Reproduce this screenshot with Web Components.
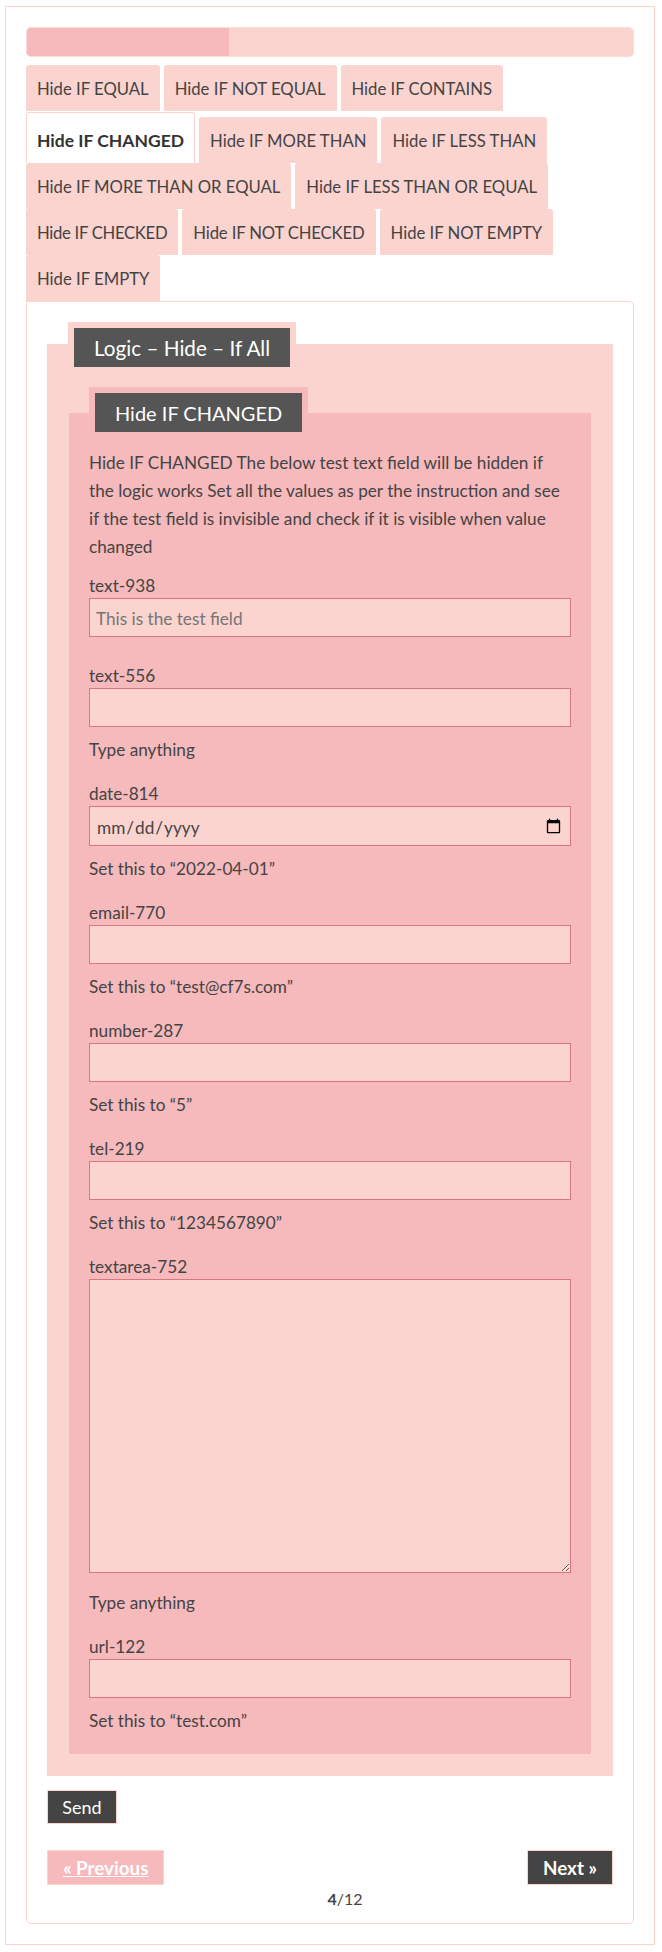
<!DOCTYPE html>
<html>
<head>
<meta charset="utf-8">
<style>
  html, body { margin: 0; padding: 0; background: #fff; }
  body { font: 17.2px/28px Lato, sans-serif; color: #444; }
</style>
</head>
<body>
<page-shell>
  <step-progress value="33.33"></step-progress>
  <step-tabs>
    <step-tab>Hide IF EQUAL</step-tab>
    <step-tab>Hide IF NOT EQUAL</step-tab>
    <step-tab>Hide IF CONTAINS</step-tab>
    <step-tab active>Hide IF CHANGED</step-tab>
    <step-tab>Hide IF MORE THAN</step-tab>
    <step-tab>Hide IF LESS THAN</step-tab>
    <step-tab>Hide IF MORE THAN OR EQUAL</step-tab>
    <step-tab>Hide IF LESS THAN OR EQUAL</step-tab>
    <step-tab style="letter-spacing:-.3px">Hide IF CHECKED</step-tab>
    <step-tab style="letter-spacing:-.15px">Hide IF NOT CHECKED</step-tab>
    <step-tab>Hide IF NOT EMPTY</step-tab>
    <step-tab>Hide IF EMPTY</step-tab>
  </step-tabs>
  <step-panel>
    <logic-group title="Logic – Hide – If All">
      <logic-group nested title="Hide IF CHANGED">
        <intro-text>Hide IF CHANGED The below test text field will be hidden if the logic works Set all the values as per the instruction and see if the test field is invisible and check if it is visible when value changed</intro-text>
        <form-field label="text-938" placeholder="This is the test field"></form-field>
        <form-field label="text-556" hint="Type anything"></form-field>
        <form-field label="date-814" type="date" hint="Set this to “2022-04-01”"></form-field>
        <form-field label="email-770" type="email" hint="Set this to “test@cf7s.com”"></form-field>
        <form-field label="number-287" type="number" hint="Set this to “5”"></form-field>
        <form-field label="tel-219" type="tel" hint="Set this to “1234567890”"></form-field>
        <form-field label="textarea-752" type="textarea" hint="Type anything"></form-field>
        <form-field label="url-122" type="url" hint="Set this to “test.com”" last></form-field>
      </logic-group>
    </logic-group>
    <send-row></send-row>
    <pager-row current="4" total="12"></pager-row>
  </step-panel>
</page-shell>

<script>
class PageShell extends HTMLElement {
  constructor() {
    super();
    const shadow = this.attachShadow({ mode: 'open' });
    shadow.innerHTML = `
      <style>
        :host {
          display: block;
          box-sizing: border-box;
          width: 650px;
          margin: 6px 0 0 5px;
          padding: 20px;
          border: 1px solid #fbd3cf;
        }
      </style>
      <slot></slot>
    `;
  }
}
customElements.define('page-shell', PageShell);

class StepProgress extends HTMLElement {
  constructor() {
    super();
    const shadow = this.attachShadow({ mode: 'open' });
    shadow.innerHTML = `
      <style>
        :host {
          display: block;
          box-sizing: border-box;
          height: 30px;
          background-color: #fbd3cf;
          border: 1px solid #fbdcd9;
          border-radius: 5px;
          overflow: hidden;
        }
        .fill { height: 100%; background-color: #f6b9bc; }
      </style>
      <div class="fill"></div>
    `;
    shadow.querySelector('.fill').style.width = this.getAttribute('value') + '%';
  }
}
customElements.define('step-progress', StepProgress);

class StepTabs extends HTMLElement {
  constructor() {
    super();
    const shadow = this.attachShadow({ mode: 'open' });
    shadow.innerHTML = `
      <style>
        :host {
          display: flex;
          flex-wrap: wrap;
          align-items: flex-end;
          column-gap: 4px;
          margin-top: 8px;
        }
      </style>
      <slot></slot>
    `;
  }
}
customElements.define('step-tabs', StepTabs);

class StepTab extends HTMLElement {
  constructor() {
    super();
    const shadow = this.attachShadow({ mode: 'open' });
    shadow.innerHTML = `
      <style>
        :host {
          display: block;
          box-sizing: border-box;
          height: 46px;
          padding: 10px 11px 8px;
          font-size: 16.7px;
          line-height: 28px;
          background-color: #fbd3cf;
          border-radius: 3px 3px 0 0;
          white-space: nowrap;
        }
        :host([active]) {
          height: 51px;
          margin-top: 1px;
          padding: 14px 10px 8px;
          font-size: 17.5px;
          font-weight: 700;
          color: #333;
          background-color: #fff;
          border: 1px solid #fbd3cf;
          border-bottom: 0;
        }
      </style>
      <slot></slot>
    `;
  }
}
customElements.define('step-tab', StepTab);

class StepPanel extends HTMLElement {
  constructor() {
    super();
    const shadow = this.attachShadow({ mode: 'open' });
    shadow.innerHTML = `
      <style>
        :host {
          display: block;
          box-sizing: border-box;
          padding: 20px 20px 10px;
          border: 1px solid #fbd3cf;
          border-radius: 0 5px 5px 5px;
        }
      </style>
      <slot></slot>
    `;
  }
}
customElements.define('step-panel', StepPanel);

class LogicGroup extends HTMLElement {
  constructor() {
    super();
    const shadow = this.attachShadow({ mode: 'open' });
    shadow.innerHTML = `
      <style>
        :host {
          display: flow-root;
          margin-top: 22px;
          padding: 0 22px 22px;
          background-color: #fbd3cf;
        }
        :host([nested]) {
          margin-top: 40px;
          padding: 0 20px 19px;
          background-color: #f6b9bc;
        }
        .legend {
          display: block;
          width: fit-content;
          margin: -22px 0 0 -1px;
          padding: 0 20px;
          height: 39px;
          line-height: 40px;
          font-size: 20.7px;
          color: #fff;
          background-color: #555;
          border: 6px solid #fbd3cf;
        }
        :host([nested]) .legend {
          margin: -26px 0 0;
          font-size: 20px;
          border-color: #f6b9bc;
        }
      </style>
      <div class="legend"></div>
      <slot></slot>
    `;
    shadow.querySelector('.legend').textContent = this.getAttribute('title');
  }
}
customElements.define('logic-group', LogicGroup);

class IntroText extends HTMLElement {
  constructor() {
    super();
    const shadow = this.attachShadow({ mode: 'open' });
    shadow.innerHTML = `
      <style>
        :host { display: block; margin: 11px 0 10px; line-height: 28px; }
      </style>
      <slot></slot>
    `;
  }
}
customElements.define('intro-text', IntroText);

class FormField extends HTMLElement {
  constructor() {
    super();
    const shadow = this.attachShadow({ mode: 'open' });
    const type = this.getAttribute('type') || 'text';
    const hint = this.getAttribute('hint');
    shadow.innerHTML = `
      <style>
        :host { display: block; margin-bottom: 24px; }
        :host([hint]) { margin-bottom: 15px; }
        :host([last]) { margin-bottom: 0; }
        .label { display: block; height: 27px; line-height: 29px; }
        input, textarea {
          display: block;
          box-sizing: border-box;
          width: 100%;
          height: 39px;
          margin: 0;
          padding: 7px 6px 5px;
          font: 17.2px Lato, sans-serif;
          color: #444;
          background-color: #fbd3cf;
          border: 1px solid #d9767f;
          border-radius: 0;
          outline: 0;
        }
        input[type="date"] { height: 40px; }
        textarea { height: 294px; }
        input::placeholder { color: #757575; opacity: 1; }
        .hint { margin-top: 9px; line-height: 28px; }
        .hint.after-area { margin-top: 16px; }
      </style>
      <label class="label"></label>
      ${type === 'textarea' ? '<textarea></textarea>' : `<input type="${type}">`}
      ${hint ? `<div class="hint ${type === 'textarea' ? 'after-area' : ''}"></div>` : ''}
    `;
    shadow.querySelector('.label').textContent = this.getAttribute('label');
    if (hint) shadow.querySelector('.hint').textContent = hint;
    const placeholder = this.getAttribute('placeholder');
    if (placeholder) shadow.querySelector('input').placeholder = placeholder;
  }
}
customElements.define('form-field', FormField);

class SendRow extends HTMLElement {
  constructor() {
    super();
    const shadow = this.attachShadow({ mode: 'open' });
    shadow.innerHTML = `
      <style>
        :host { display: block; margin-top: 14px; height: 34px; }
        button {
          box-sizing: border-box;
          width: 70px;
          height: 34px;
          padding: 0;
          font: 18px Lato, sans-serif;
          color: #fff;
          background-color: #444;
          border: 1px solid #fbd3cf;
          border-radius: 0;
        }
      </style>
      <button type="button">Send</button>
    `;
  }
}
customElements.define('send-row', SendRow);

class PagerRow extends HTMLElement {
  constructor() {
    super();
    const shadow = this.attachShadow({ mode: 'open' });
    shadow.innerHTML = `
      <style>
        :host { display: block; margin-top: 26px; }
        .links { display: flex; justify-content: space-between; }
        a {
          box-sizing: border-box;
          height: 35px;
          line-height: 33px;
          padding: 0 15px;
          font-size: 18.8px;
          font-weight: 700;
          color: #fff;
          border: 1px solid #fbd3cf;
        }
        .prev { background-color: #f6b9bc; text-decoration: underline; }
        .next { background-color: #444; text-decoration: none; }
        .count { padding-left: 30px; text-align: center; font-size: 16px; line-height: 28px; }
      </style>
      <div class="links">
        <a class="prev" href="#">« Previous</a>
        <a class="next" href="#">Next »</a>
      </div>
      <div class="count"><b>${this.getAttribute('current')}</b>/${this.getAttribute('total')}</div>
    `;
  }
}
customElements.define('pager-row', PagerRow);
</script>
</body>
</html>
